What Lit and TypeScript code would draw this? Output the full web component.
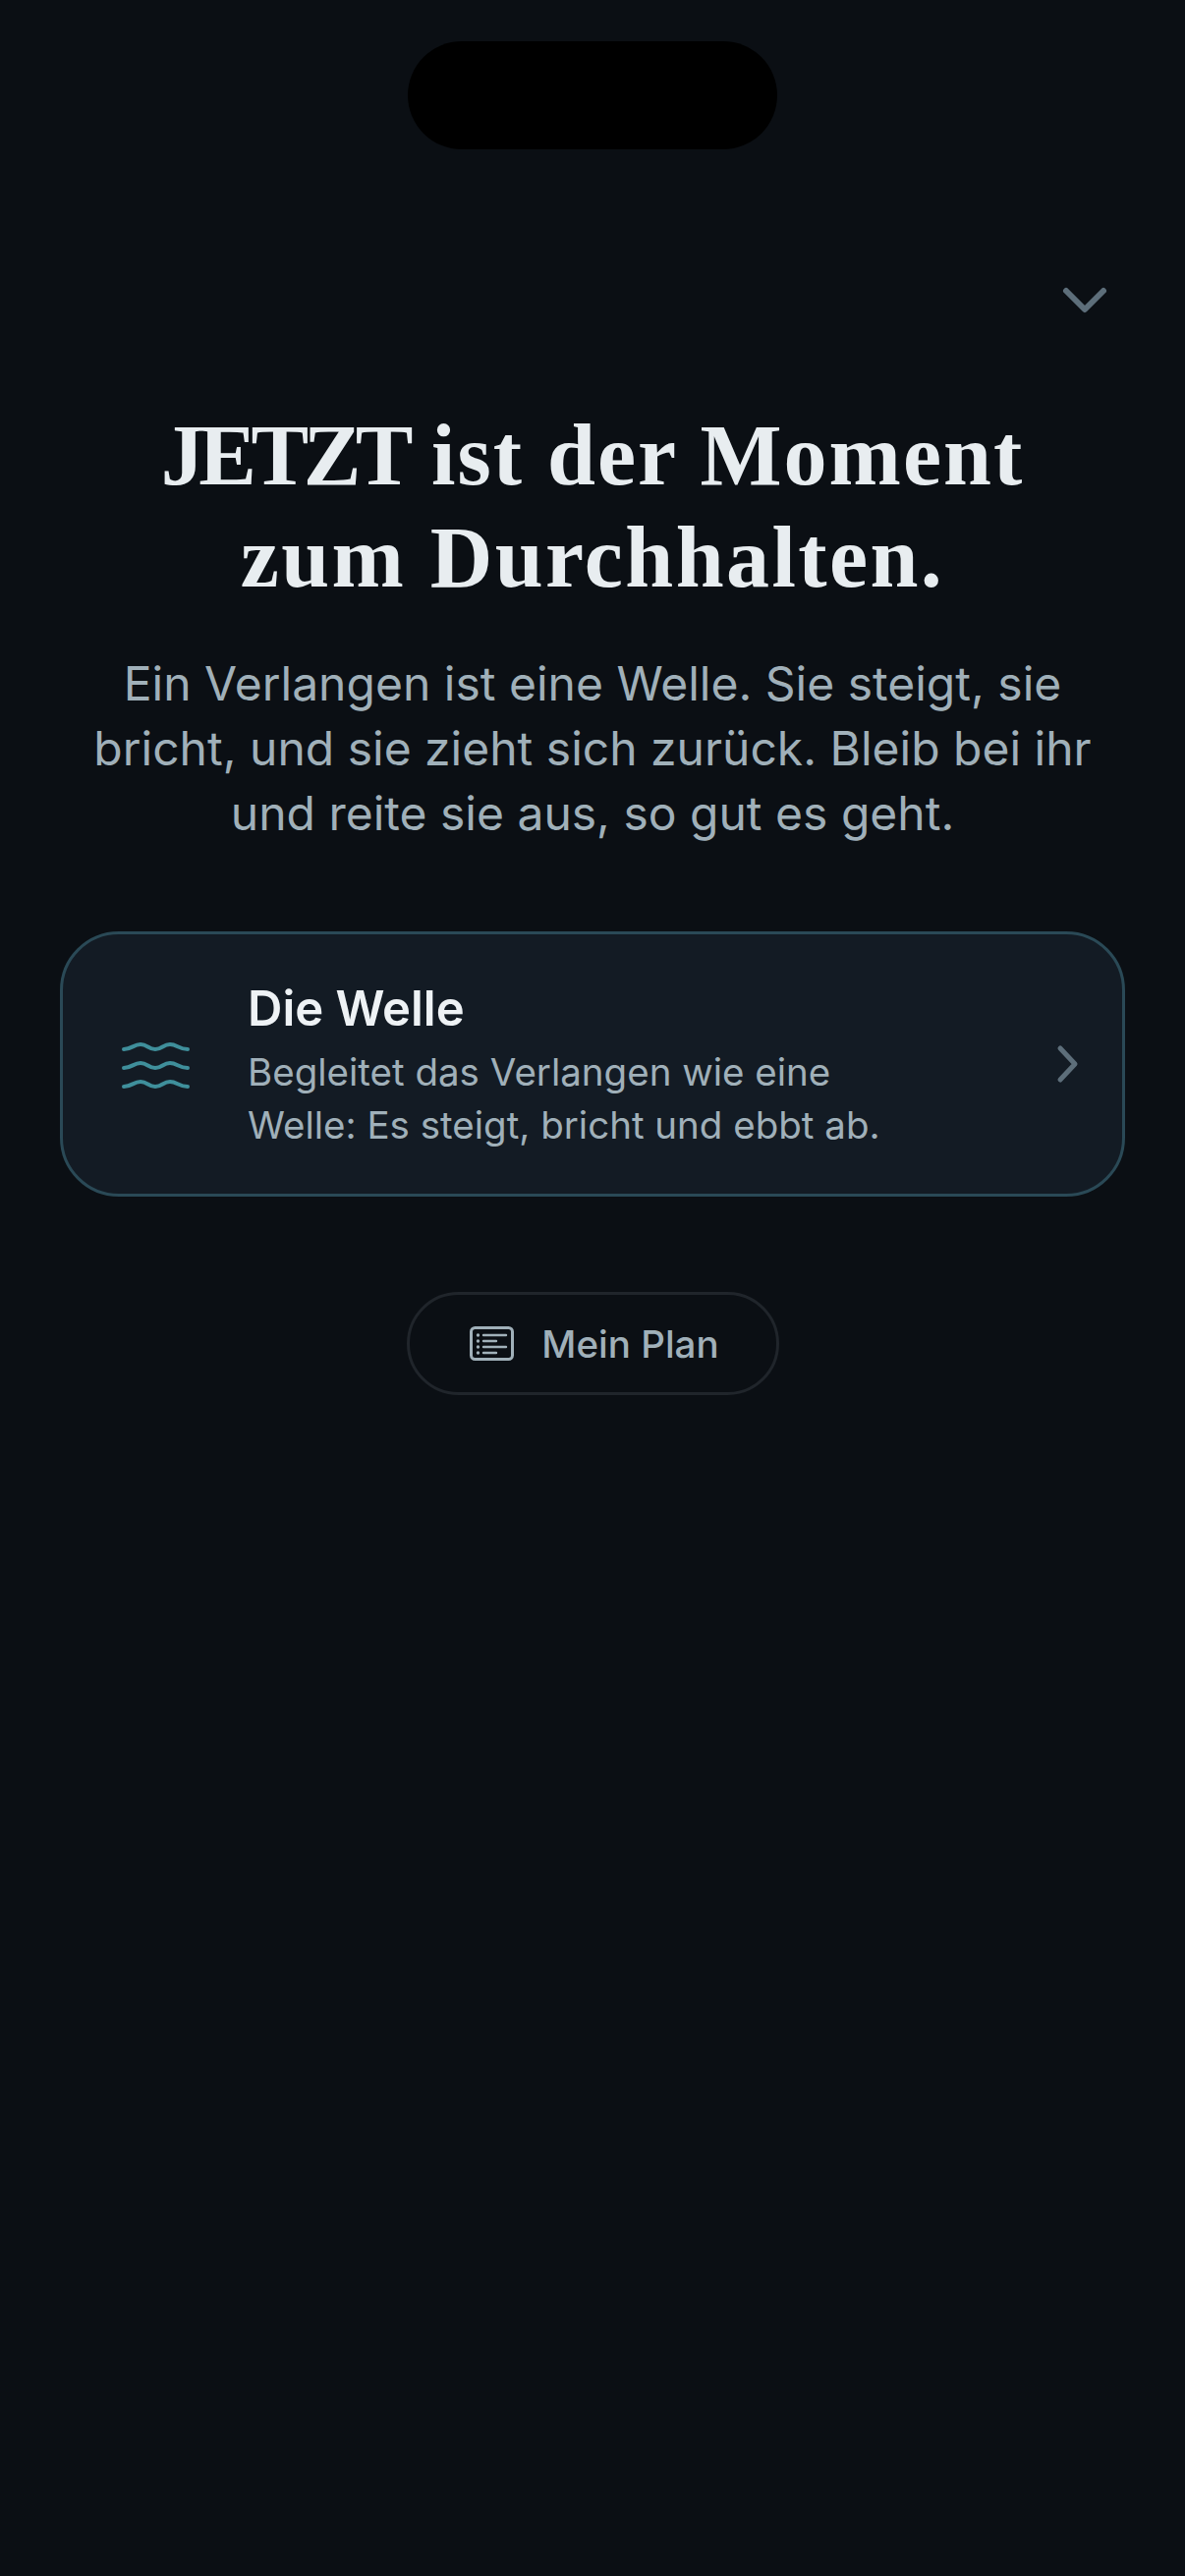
import { LitElement, html, css } from "lit";
import { customElement } from "lit/decorators.js";

@customElement("app-root")
export class AppRoot extends LitElement {
  static styles = css`
    :host { display: block; width: 1206px; height: 2622px; background: #0b0f14; position: relative; overflow: hidden; font-family: Inter, "Noto Sans", sans-serif; }
    .island { position: absolute; left: 415px; top: 42px; width: 376px; height: 110px; border-radius: 55px; background: #000; }
    .page { display: flex; flex-direction: column; align-items: center; padding: 272px 61px 0; }
    .top { align-self: stretch; display: flex; justify-content: flex-end; height: 64px; padding-right: 17px; }
    .close { width: 48px; height: 64px; display: block; margin-top: 1px; }
    h1 { margin: 76px 0 0; font-family: "Liberation Serif", serif; font-weight: 700; font-size: 88px; line-height: 104px; color: #e8edf0; text-align: center; letter-spacing: 2px; }
    .caps { letter-spacing: -5.5px; }
    .second { letter-spacing: 2.4px; }
    .sub { margin: 43px 0 0; font-size: 48px; line-height: 66px; color: #a0b0b9; text-align: center; width: 1060px; }
    .card { box-sizing: border-box; align-self: stretch; height: 270px; margin-top: 87px; display: flex; align-items: center; border: 3px solid #2a4956; border-radius: 60px; background: #131b24; padding: 0 41px 0 58px; }
    .wave { width: 72px; height: 60px; flex: none; }
    .text { flex: 1; margin-left: 58px; padding-top: 2px; }
    .title { font-size: 49px; font-weight: 600; line-height: 60px; color: #eef2f5; }
    .desc { margin-top: 7px; font-size: 38.5px; line-height: 54px; color: #a0b0b9; }
    .arrow { width: 30px; height: 40px; flex: none; }
    .plan { box-sizing: border-box; margin-top: 97px; width: 379px; height: 105px; border: 3px solid #20252b; border-radius: 53px; display: flex; align-items: center; justify-content: center; gap: 28px; padding-left: 4px; font-size: 38.5px; font-weight: 500; color: #a0b0b9; }
    .list { width: 45px; height: 35px; flex: none; }
  `;

  render() {
    return html`
      <div class="island"></div>
      <main class="page">
        <div class="top">
          <svg class="close" viewBox="0 0 48 64" fill="none" stroke="#5d6e7a" stroke-width="6" stroke-linecap="round" stroke-linejoin="round"><path d="M5 23 L24 42 L43 23"/></svg>
        </div>
        <h1><span class="caps">JETZT</span> ist der Moment<br><span class="second">zum Durchhalten.</span></h1>
        <p class="sub">Ein Verlangen ist eine Welle. Sie steigt, sie bricht, und sie zieht sich zurück. Bleib bei ihr und reite sie aus, so gut es geht.</p>
        <section class="card">
          <svg class="wave" viewBox="0 0 72 60" fill="none" stroke="#3f8f9b" stroke-width="4" stroke-linecap="round">
            <path d="M4 15 C12 15 14 10 21 10 C28 10 29 15 36 15 C43 15 44 10 51 10 C58 10 60 15 69 15"/>
            <path d="M4 34 C12 34 14 29 21 29 C28 29 29 34 36 34 C43 34 44 29 51 29 C58 29 60 34 69 34"/>
            <path d="M4 53 C12 53 14 48 21 48 C28 48 29 53 36 53 C43 53 44 48 51 48 C58 48 60 53 69 53"/>
          </svg>
          <div class="text">
            <div class="title">Die Welle</div>
            <div class="desc">Begleitet das Verlangen wie eine<br>Welle: Es steigt, bricht und ebbt ab.</div>
          </div>
          <svg class="arrow" viewBox="0 0 30 40" fill="none" stroke="#5d6e7a" stroke-width="5" stroke-linecap="round" stroke-linejoin="round"><path d="M8 4 L23 20 L8 36"/></svg>
        </section>
        <div class="plan">
          <svg class="list" viewBox="0 0 45 35" fill="none" stroke="#a0b0b9" stroke-linecap="round">
            <rect x="1.5" y="1.5" width="42" height="32" rx="4" stroke-width="3"/>
            <path d="M14 9 H37 M14 15 H27 M14 21 H37 M14 27 H27" stroke-width="2.4"/>
            <path d="M8.5 9 h.01 M8.5 15 h.01 M8.5 21 h.01 M8.5 27 h.01" stroke-width="3.4"/>
          </svg>
          <span>Mein Plan</span>
        </div>
      </main>
    `;
  }
}
